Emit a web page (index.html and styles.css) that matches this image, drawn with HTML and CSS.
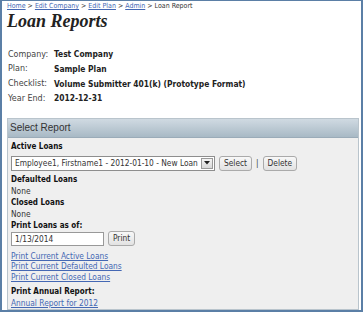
FILE: index.html
```html
<!DOCTYPE html>
<html lang="en">
  <head>
    <meta charset="UTF-8">
    <title>Loan Reports</title>
    <link rel="stylesheet" href="styles.css">
  </head>
  <body>
    <div id="frame">
      <div class="crumbs">
        <a href="#">Home</a> &gt; <a href="#">Edit Company</a> &gt; <a href="#">Edit Plan</a> &gt; <a href="#">Admin</a> &gt; Loan Report
      </div>
      <h1>Loan Reports</h1>
      <div class="info">
        <span class="lbl">Company:</span><span class="val">Test Company</span>
        <span class="lbl">Plan:</span><span class="val">Sample Plan</span>
        <span class="lbl">Checklist:</span><span class="val">Volume Submitter 401(k) (Prototype Format)</span>
        <span class="lbl">Year End:</span><span class="val">2012-12-31</span>
      </div>
      <div class="panel">
        <div class="panel-head">Select Report</div>
        <div class="panel-body">
          <div class="sub">Active Loans</div>
          <div class="row loan-row">
            <span class="select">
              <span class="select-text">Employee1, Firstname1 - 2012-01-10 - New Loan</span>
              <span class="arrow"><svg width="6" height="4" viewBox="0 0 6 4"><path d="M0 0 L6 0 L3 3.5 Z" fill="#222"/></svg></span>
            </span>
            <span class="btn">Select</span>
            <span class="sep">|</span>
            <span class="btn">Delete</span>
          </div>
          <div class="sub">Defaulted Loans</div>
          <div class="none">None</div>
          <div class="sub">Closed Loans</div>
          <div class="none">None</div>
          <div class="sub">Print Loans as of:</div>
          <div class="row date-row">
            <span class="datebox">1/13/2014</span>
            <span class="btn">Print</span>
          </div>
          <div class="links">
            <a href="#">Print Current Active Loans</a>
            <a href="#">Print Current Defaulted Loans</a>
            <a href="#">Print Current Closed Loans</a>
          </div>
          <div class="sub annual">Print Annual Report:</div>
          <div class="none"><a href="#">Annual Report for 2012</a></div>
        </div>
      </div>
    </div>
  </body>
</html>
```

FILE: styles.css
```css
html,
body {
  margin: 0;
  width: 363px;
  height: 312px;
  overflow: hidden;
  background: #fff;
}

#frame {
  box-sizing: border-box;
  width: 363px;
  height: 312px;
  border: 2px solid #5b7fa6;
  border-top-width: 1px;
  padding: 1px 2px 0 5px;
  font-family: 'DejaVu Sans', Verdana, sans-serif;
  color: #222;
}

a {
  color: #4468b4;
  text-decoration: underline;
}

.crumbs {
  font-family: 'DejaVu Sans Condensed', 'DejaVu Sans', sans-serif;
  font-size: 7px;
  line-height: 9px;
  color: #333;
}

h1 {
  font-family: 'Liberation Serif', 'Times New Roman', serif;
  font-style: italic;
  font-weight: bold;
  font-size: 18px;
  line-height: 18px;
  margin: 1px 0 17px 0;
  color: #222;
}

.info {
  display: grid;
  grid-template-columns: 46px auto;
  grid-auto-rows: 14.67px;
  align-items: center;
  margin: 0 0 12px 1px;
}

.lbl {
  font-size: 8px;
  color: #444;
}

.val {
  font-family: 'DejaVu Sans Condensed', 'DejaVu Sans', sans-serif;
  font-weight: bold;
  font-size: 8.4px;
  color: #222;
}

.panel {
  box-sizing: border-box;
  border: 1px solid #b9c4cc;
  width: 352px;
  height: 192px;
  background: #efefef;
}

.panel-head {
  height: 18px;
  line-height: 18px;
  padding-left: 2px;
  font-family: 'Liberation Sans', Arial, sans-serif;
  font-size: 10px;
  color: #333;
  background: linear-gradient(#d0dae2, #a8b9c5);
  border-bottom: 1px solid #9aabb8;
}

.panel-body {
  padding: 3px 3px;
  font-family: 'DejaVu Sans Condensed', 'DejaVu Sans', sans-serif;
  font-size: 8.3px;
}

.sub {
  font-weight: bold;
  font-size: 8px;
  line-height: 12px;
  color: #111;
}

.none {
  line-height: 11px;
  color: #333;
}

.row {
  display: flex;
  align-items: center;
  gap: 4px;
}

.loan-row {
  height: 15px;
  margin: 3px 0 3px 0;
}

.date-row {
  height: 14px;
}

.select {
  display: flex;
  align-items: center;
  box-sizing: border-box;
  width: 204px;
  height: 15px;
  border: 1px solid #8e8e8e;
  background: #fff;
  padding-left: 3px;
  color: #333;
}

.select-text {
  flex: 1;
  white-space: nowrap;
  overflow: hidden;
}

.arrow {
  display: flex;
  align-items: center;
  justify-content: center;
  box-sizing: border-box;
  width: 12px;
  height: 11px;
  margin-right: 1px;
  border: 1px solid #999;
  background: linear-gradient(#f4f4f4, #d8d8d8);
}

.btn {
  box-sizing: border-box;
  height: 15px;
  line-height: 13px;
  padding: 0 4px;
  border: 1px solid #aaa;
  border-radius: 3px;
  background: linear-gradient(#f8f8f8, #e2e2e2);
  color: #333;
}

.sep {
  color: #333;
}

.datebox {
  box-sizing: border-box;
  width: 93px;
  height: 14px;
  line-height: 12px;
  padding-left: 3px;
  border: 1px solid #999;
  background: #fff;
  color: #333;
}

.links {
  display: flex;
  flex-direction: column;
  align-items: flex-start;
  line-height: 10.5px;
  margin-top: 5px;
}

.annual {
  margin-top: 4px;
}
```
